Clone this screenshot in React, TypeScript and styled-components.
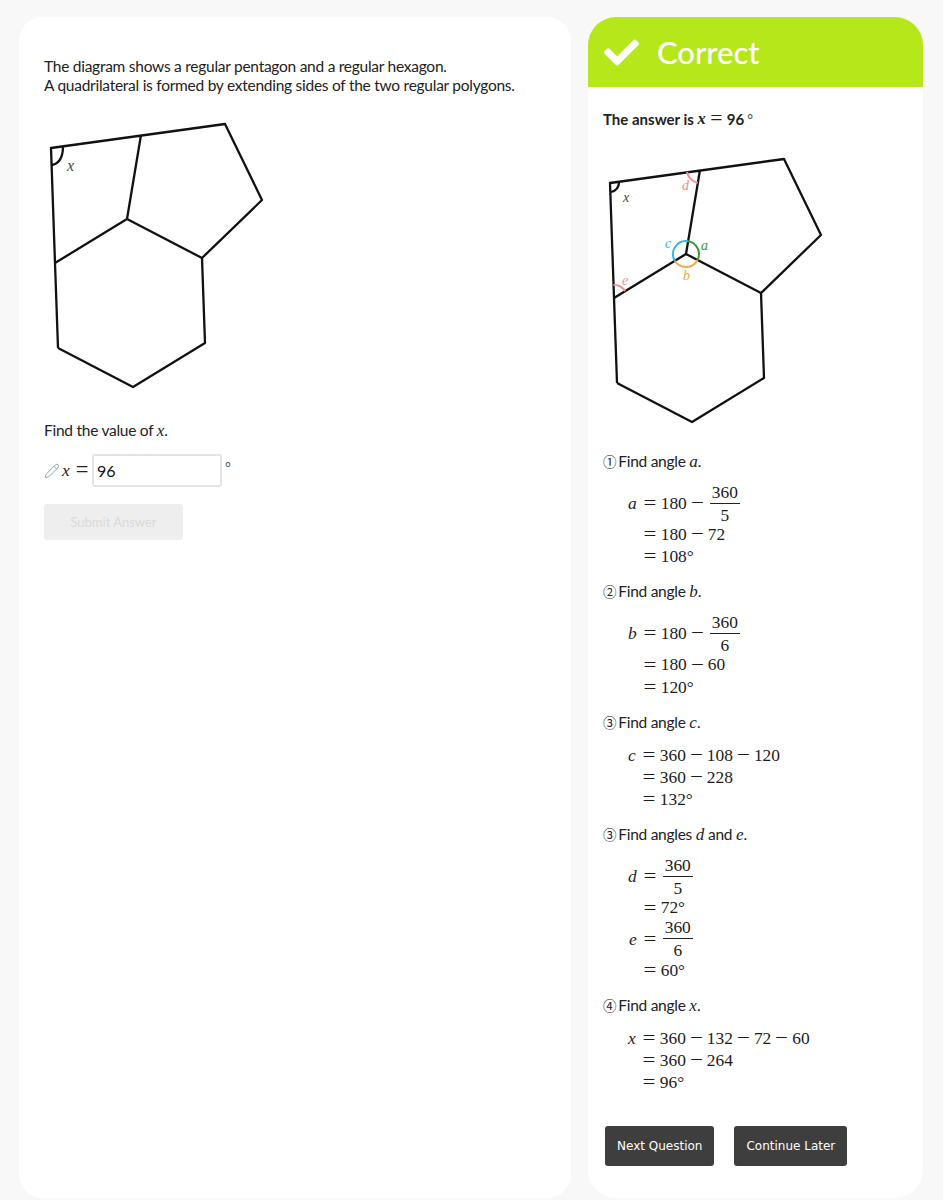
import React from "react";
import styled, { createGlobalStyle } from "styled-components";
import { FaCheck } from "react-icons/fa";
import { Pencil } from "lucide-react";

const GlobalStyle = createGlobalStyle`
  html, body {
    margin: 0;
    background: #f8f8f8;
  }
`;

const Page = styled.div`
  display: flex;
  gap: 17px;
  height: 1200px;
  box-sizing: border-box;
  padding: 17px 20px 2px 19px;
  overflow: hidden;
  font-family: Lato, "Liberation Sans", sans-serif;
  font-size: 15.5px;
  letter-spacing: -0.26px;
  line-height: 19px;
  color: #222;
`;

const QuestionCard = styled.section`
  width: 552px;
  box-sizing: border-box;
  padding: 40px 25px 0;
  background: #fff;
  border-radius: 24px;
`;

const FeedbackCard = styled.section`
  width: 335px;
  background: #fff;
  border-radius: 28px;
  overflow: hidden;
`;

const Para = styled.p`
  margin: 0;
`;

const Prompt = styled(Para)`
  margin-top: 26px;
`;

const Figure = styled.svg`
  display: block;
  margin-top: 20px;
`;

const AnswerRow = styled.div`
  display: flex;
  align-items: center;
  margin-top: 14px;
  height: 33px;
`;

const PencilIcon = styled(Pencil)`
  flex: none;
  color: #8f9aa0;
  margin-right: 1px;
`;

const MathVar = styled.i`
  font-family: "Liberation Serif", serif;
  font-size: 1.1em;
  letter-spacing: 0;
`;

const InlineEq = styled.span`
  display: flex;
  align-items: center;
  width: 31px;
  padding-left: 1px;
  box-sizing: border-box;
  font-family: "Liberation Serif", serif;
  font-size: 17.4px;
  letter-spacing: 0;
`;

const InlineEqSign = styled.span`
  font-size: 1.3em;
  line-height: 1;
  margin-left: 6px;
`;

const AnswerInput = styled.input`
  width: 130px;
  height: 33px;
  box-sizing: border-box;
  padding: 0 3px;
  border: 2px solid #e4e4e4;
  border-radius: 3px;
  font-family: Lato, sans-serif;
  font-size: 16px;
  color: #111;
  outline: none;
`;

const Degree = styled.span`
  align-self: flex-start;
  margin: 3px 0 0 3px;
  font-size: 14px;
  color: #555;
`;

const SubmitButton = styled.button`
  display: block;
  width: 139px;
  height: 36px;
  margin-top: 17px;
  border: 0;
  border-radius: 3px;
  background: #eeeeee;
  color: #dadada;
  font-family: Lato, sans-serif;
  font-size: 13px;
`;

const Banner = styled.header`
  display: flex;
  align-items: center;
  gap: 18px;
  height: 70px;
  padding-left: 16px;
  background: #b5e71a;
  color: #fff;
  font-size: 31px;
  font-weight: 500;
  letter-spacing: 0;
`;

const FeedbackBody = styled.div`
  padding: 22px 15px 0;

  ${Figure} {
    margin-top: 21px;
  }
`;

const AnswerLine = styled.p`
  display: flex;
  align-items: center;
  margin: 0;
  font-weight: 700;
  font-size: 15px;
  letter-spacing: 0;
  height: 20px;
  line-height: 20px;
  white-space: pre;
`;

const AnswerEq = styled.span`
  display: inline-block;
  width: 21px;
  text-align: center;
  font-family: "Liberation Serif", serif;
  font-size: 1.45em;
  font-weight: 400;
  line-height: 1;
`;

const AnswerDegree = styled.span`
  align-self: flex-start;
  font-weight: 400;
  font-size: 14px;
  margin-left: 3px;
  color: #444;
`;

const Steps = styled.div`
  margin-top: 22px;
`;

const Step = styled.div`
  & + & {
    margin-top: 15px;
  }
`;

const StepTitle = styled.p`
  margin: 0 0 12px;
`;

const Circled = styled.span`
  display: inline-block;
  width: 11.5px;
  font-family: "Noto Sans CJK JP", sans-serif;
  font-size: 13.5px;
  line-height: 1;
  letter-spacing: 0;
`;

const Eq = styled.div`
  display: grid;
  grid-template-columns: auto auto;
  justify-content: start;
  align-items: center;
  margin-left: 25px;
  font-family: "Liberation Serif", serif;
  font-size: 17.4px;
  letter-spacing: 0;
  line-height: 22.2px;
  color: #1c1c1c;
`;

const Lhs = styled.span`
  font-style: italic;
  text-align: right;
  padding-right: 2px;
`;

const Rhs = styled.span`
  display: flex;
  align-items: center;
  white-space: pre;
`;

const Op = styled.span<{ $w: number }>`
  display: inline-block;
  width: ${(p) => p.$w}px;
  text-align: center;
  flex: none;
  font-size: 1.08em;
  line-height: 20px;
  transform: scaleX(1.22);
`;

const Frac = styled.span`
  display: inline-flex;
  flex-direction: column;
  align-items: center;
  height: 40px;
  justify-content: center;
  margin-left: 2px;
  line-height: 20px;
`;

const Num = styled.span`
  padding: 0 2px 1px;
  border-bottom: 1px solid #222;
`;

const Den = styled.span`
  padding-top: 1px;
`;

const Actions = styled.div`
  display: flex;
  gap: 20px;
  margin: 33px 0 0 2px;
`;

const DarkButton = styled.button`
  height: 40px;
  padding: 0 12px;
  border: 0;
  border-radius: 3px;
  background: #3e3e3e;
  color: #fff;
  font-family: "DejaVu Sans", sans-serif;
  font-size: 12px;
`;

function PolygonFigure({ solved }: { solved?: boolean }) {
  return (
    <Figure width="240" height="280" viewBox="44 115 240 280">
      <g fill="none" stroke="#111" strokeWidth="2.3" strokeLinejoin="round">
        <path d="M58 348 L55 263 L51 148 L225 124 L262 200 L202 258 L127 219 L141 135" />
        <path d="M55 263 L127 219 M202 258 L205 343 L133 387 L58 348" />
        <path d={solved ? "M60 147 Q60 155 52 157" : "M63 146 Q63 163 52 165"} />
      </g>
      {solved ? (
        <>
          <g fill="none" strokeWidth="2">
            <path d="M129.1 206.2 A13 13 0 0 1 138.5 225" stroke="#3a9a3a" />
            <path d="M138.5 225 A13 13 0 0 1 115.9 225.8" stroke="#f0aa48" />
            <path d="M115.9 225.8 A13 13 0 0 1 129.1 206.2" stroke="#3fb2e2" />
            <path d="M138.9 147.8 A13 13 0 0 1 128.1 136.9" stroke="#f08e8e" />
            <path d="M54.5 250 A13 13 0 0 1 66.1 256.2" stroke="#f08e8e" />
          </g>
          <g fontFamily="Liberation Serif, serif" fontStyle="italic" fontSize="14">
            <text x="64" y="167" fill="#444">x</text>
            <text x="142" y="215" fill="#3a9a3a">a</text>
            <text x="124" y="245" fill="#f0aa48">b</text>
            <text x="106" y="213" fill="#3fb2e2">c</text>
            <text x="123" y="155" fill="#f08e8e">d</text>
            <text x="63" y="250" fill="#f08e8e">e</text>
          </g>
        </>
      ) : (
        <text x="67" y="171" fontFamily="Liberation Serif, serif" fontStyle="italic" fontSize="16" fill="#444">
          x
        </text>
      )}
    </Figure>
  );
}

function Fraction({ top, bottom }: { top: string; bottom: string }) {
  return (
    <Frac>
      <Num>{top}</Num>
      <Den>{bottom}</Den>
    </Frac>
  );
}

function Line({ lhs, children }: { lhs?: string; children: React.ReactNode }) {
  return (
    <>
      <Lhs>{lhs}</Lhs>
      <Rhs>
        <Op $w={22}>=</Op>
        {children}
      </Rhs>
    </>
  );
}

const Minus = () => <Op $w={21}>−</Op>;

export default function App() {
  return (
    <Page>
      <GlobalStyle />
      <QuestionCard>
        <Para>
          The diagram shows a regular pentagon and a regular hexagon.
          <br />A quadrilateral is formed by extending sides of the two regular polygons.
        </Para>
        <PolygonFigure />
        <Prompt>
          Find the value of <MathVar>x</MathVar>.
        </Prompt>
        <AnswerRow>
          <PencilIcon size={16} strokeWidth={1.4} />
          <InlineEq>
            <i>x</i>
            <InlineEqSign>=</InlineEqSign>
          </InlineEq>
          <AnswerInput value="96" readOnly />
          <Degree>°</Degree>
        </AnswerRow>
        <SubmitButton disabled>Submit Answer</SubmitButton>
      </QuestionCard>

      <FeedbackCard>
        <Banner>
          <FaCheck size={35} />
          Correct
        </Banner>
        <FeedbackBody>
          <AnswerLine>
            The answer is <MathVar>x</MathVar>
            <AnswerEq>=</AnswerEq>96<AnswerDegree>°</AnswerDegree>
          </AnswerLine>
          <PolygonFigure solved />
          <Steps>
            <Step>
              <StepTitle>
                <Circled>①</Circled> Find angle <MathVar>a</MathVar>.
              </StepTitle>
              <Eq>
                <Line lhs="a">
                  180
                  <Minus />
                  <Fraction top="360" bottom="5" />
                </Line>
                <Line>
                  180
                  <Minus />
                  72
                </Line>
                <Line>108°</Line>
              </Eq>
            </Step>
            <Step>
              <StepTitle>
                <Circled>②</Circled> Find angle <MathVar>b</MathVar>.
              </StepTitle>
              <Eq>
                <Line lhs="b">
                  180
                  <Minus />
                  <Fraction top="360" bottom="6" />
                </Line>
                <Line>
                  180
                  <Minus />
                  60
                </Line>
                <Line>120°</Line>
              </Eq>
            </Step>
            <Step>
              <StepTitle>
                <Circled>③</Circled> Find angle <MathVar>c</MathVar>.
              </StepTitle>
              <Eq>
                <Line lhs="c">
                  360
                  <Minus />
                  108
                  <Minus />
                  120
                </Line>
                <Line>
                  360
                  <Minus />
                  228
                </Line>
                <Line>132°</Line>
              </Eq>
            </Step>
            <Step>
              <StepTitle>
                <Circled>③</Circled> Find angles <MathVar>d</MathVar> and <MathVar>e</MathVar>.
              </StepTitle>
              <Eq>
                <Line lhs="d">
                  <Fraction top="360" bottom="5" />
                </Line>
                <Line>72°</Line>
                <Line lhs="e">
                  <Fraction top="360" bottom="6" />
                </Line>
                <Line>60°</Line>
              </Eq>
            </Step>
            <Step>
              <StepTitle>
                <Circled>④</Circled> Find angle <MathVar>x</MathVar>.
              </StepTitle>
              <Eq>
                <Line lhs="x">
                  360
                  <Minus />
                  132
                  <Minus />
                  72
                  <Minus />
                  60
                </Line>
                <Line>
                  360
                  <Minus />
                  264
                </Line>
                <Line>96°</Line>
              </Eq>
            </Step>
          </Steps>
          <Actions>
            <DarkButton>Next Question</DarkButton>
            <DarkButton>Continue Later</DarkButton>
          </Actions>
        </FeedbackBody>
      </FeedbackCard>
    </Page>
  );
}
